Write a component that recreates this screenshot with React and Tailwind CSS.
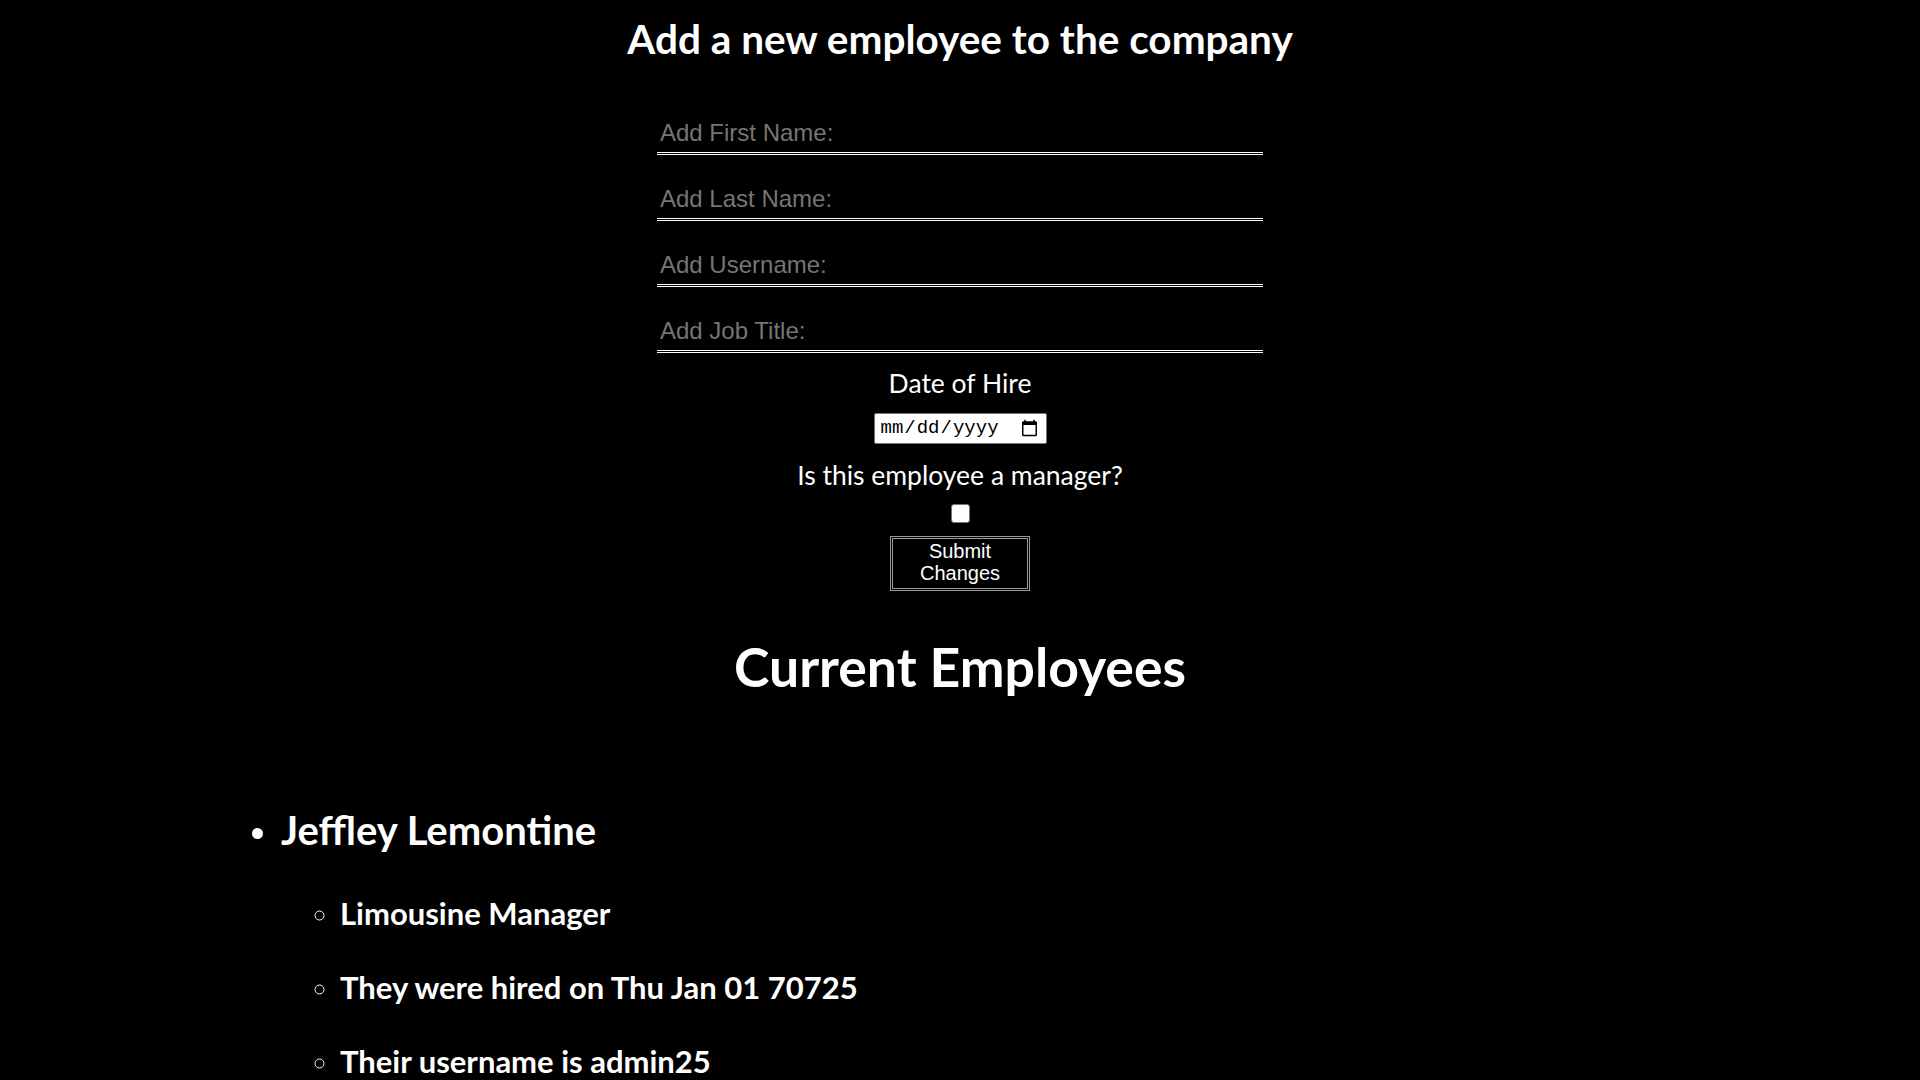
import { useState } from 'react';

const employees = [
  {
    id: 1,
    firstName: 'Jeffley',
    lastName: 'Lemontine',
    jobTitle: 'Limousine Manager',
    hired: 'Thu Jan 01 70725',
    username: 'admin25',
  },
];

function TextField({ placeholder, value, onChange, className = '' }) {
  return (
    <input
      type="text"
      value={value}
      onChange={onChange}
      placeholder={placeholder}
      className={`block w-[606px] h-[40px] px-[3px] pb-[2px] bg-transparent text-white text-[24px] border-0 border-b-[3px] border-double border-white outline-none placeholder:text-[#757575] font-['Liberation_Sans',Arial,sans-serif] ${className}`}
    />
  );
}

export default function App() {
  const [form, setForm] = useState({ first: '', last: '', username: '', title: '', hired: '', manager: false });

  const update = (key) => (e) => setForm({ ...form, [key]: e.target.value });

  return (
    <div className="min-h-screen bg-black text-white font-['Lato','Open_Sans',sans-serif]">
      {/* add employee form */}
      <form className="flex flex-col items-center" onSubmit={(e) => e.preventDefault()}>
        <h1 className="mt-[15px] text-[40.5px] leading-[48px] font-bold">Add a new employee to the company</h1>

        <TextField className="mt-[52px]" placeholder="Add First Name:" value={form.first} onChange={update('first')} />
        <TextField className="mt-[26px]" placeholder="Add Last Name:" value={form.last} onChange={update('last')} />
        <TextField className="mt-[26px]" placeholder="Add Username:" value={form.username} onChange={update('username')} />
        <TextField className="mt-[26px]" placeholder="Add Job Title:" value={form.title} onChange={update('title')} />

        <label className="mt-[15px] text-[26.5px] leading-[30px]">Date of Hire</label>
        <input
          type="date"
          value={form.hired}
          onChange={update('hired')}
          className="mt-[15px] w-[173px] h-[31px] px-[5px] bg-white text-black border border-[#767676] rounded-[2px] text-[19px] font-['Liberation_Mono','DejaVu_Sans_Mono',monospace] [color-scheme:light]"
        />

        <label className="mt-[16px] text-[26.5px] leading-[30px]">Is this employee a manager?</label>
        <input
          type="checkbox"
          checked={form.manager}
          onChange={(e) => setForm({ ...form, manager: e.target.checked })}
          className="mt-[14px] appearance-none w-[19px] h-[19px] bg-white border border-[#767676] rounded-[3px] checked:bg-[#0075ff]"
        />

        <button
          type="submit"
          className="mt-[13px] w-[140px] h-[55px] pb-[3px] border-[3px] border-double border-[#9b9b9b] text-white text-[20px] leading-[22px] font-['Liberation_Sans',Arial,sans-serif]"
        >
          Submit Changes
        </button>

        <h2 className="mt-[45px] text-[53.5px] leading-[61px] font-bold">Current Employees</h2>
      </form>

      {/* employee list */}
      <ul className="mt-[110px] ml-[241px] pl-[40px] list-disc font-bold [&>li::marker]:text-[33px]">
        {employees.map((emp) => (
          <li key={emp.id} className="text-[40px] leading-[46px]">
            {emp.firstName} {emp.lastName}
            <ul className="mt-[45px] pl-[59px] list-[circle] flex flex-col gap-[43px] [&>li::marker]:text-[27px]">
              <li className="text-[31px] leading-[31px]">{emp.jobTitle}</li>
              <li className="text-[31px] leading-[31px]">They were hired on {emp.hired}</li>
              <li className="text-[31px] leading-[31px]">Their username is {emp.username}</li>
            </ul>
          </li>
        ))}
      </ul>
    </div>
  );
}
